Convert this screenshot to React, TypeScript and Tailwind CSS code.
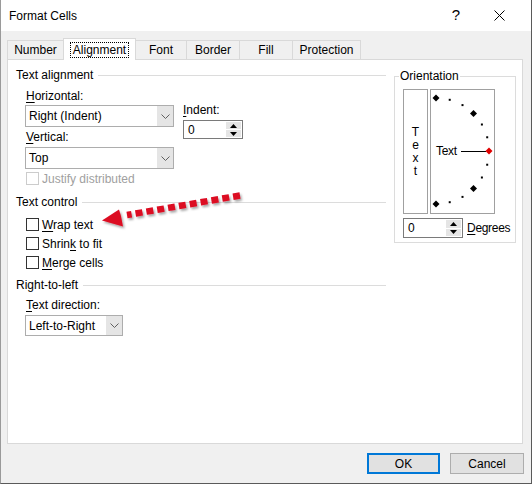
import React from "react";

function Chevron() {
  return (
    <svg width="9" height="5" viewBox="0 0 9 5" fill="none">
      <path d="M0.5 0.5 L4.5 4.5 L8.5 0.5" stroke="#606060" strokeWidth="1" />
    </svg>
  );
}

function Select({ value, className }: { value: string; className: string }) {
  return (
    <div className={`flex border border-[#adadad] bg-white ${className}`}>
      <span className="flex-1 pl-[3px] flex items-center">{value}</span>
      <span className="w-[16px] bg-[#e5e5e5] flex items-center justify-center">
        <Chevron />
      </span>
    </div>
  );
}

function Spinner({ className }: { className: string }) {
  return (
    <div className={`flex border border-[#7a7a7a] bg-white ${className}`}>
      <span className="flex-1 pl-[4px] flex items-center">0</span>
      <div className="w-[17px] flex flex-col gap-[1px] p-[1px]">
        <span className="flex-1 bg-[#e5e5e5] flex items-center justify-center">
          <svg width="7" height="4" viewBox="0 0 7 4">
            <path d="M0 4 L3.5 0 L7 4 Z" fill="#000" />
          </svg>
        </span>
        <span className="flex-1 bg-[#e5e5e5] flex items-center justify-center">
          <svg width="7" height="4" viewBox="0 0 7 4">
            <path d="M0 0 L3.5 4 L7 0 Z" fill="#000" />
          </svg>
        </span>
      </div>
    </div>
  );
}

function Checkbox({ label, disabled }: { label: React.ReactNode; disabled?: boolean }) {
  return (
    <div className="flex items-center h-[13px] ml-[18px] gap-[3px]">
      <span
        className={`w-[13px] h-[13px] border bg-white ${disabled ? "border-[#cccccc]" : "border-[#333333]"}`}
      />
      <span className={disabled ? "text-[#a0a0a0]" : "text-black"}>{label}</span>
    </div>
  );
}

function Header({ title, className }: { title: string; className: string }) {
  return (
    <div className={`flex items-center h-[14px] pl-[8px] ${className}`}>
      <span className="pr-[5px]">{title}</span>
      <span className="flex-1 h-px bg-[#dcdcdc]" />
    </div>
  );
}

function U({ children }: { children: React.ReactNode }) {
  return <span className="underline underline-offset-2">{children}</span>;
}

function Dial() {
  const marks: { x: number; y: number; big: boolean; angle: number }[] = [];
  for (let a = 90; a >= -90; a -= 15) {
    const r = (a * Math.PI) / 180;
    marks.push({ x: 5 + 53 * Math.cos(r), y: 61 - 53 * Math.sin(r), big: a % 45 === 0, angle: a });
  }
  return (
    <div className="relative w-[65px] h-[125px] border border-[#a0a0a0] ml-[2px]">
      <svg width="63" height="123" viewBox="0 0 63 123" className="block">
        <line x1="30" y1="61.5" x2="55" y2="61.5" stroke="#000" strokeWidth="1" />
        {marks.map((m) =>
          m.big ? (
            <path
              key={m.angle}
              d={`M${m.x} ${m.y - 3.5} L${m.x + 3.5} ${m.y} L${m.x} ${m.y + 3.5} L${m.x - 3.5} ${m.y} Z`}
              fill={m.angle === 0 ? "#e00000" : "#000"}
            />
          ) : (
            <rect key={m.angle} x={m.x - 1} y={m.y - 1} width="2" height="2" fill="#000" />
          )
        )}
      </svg>
      <span className="absolute left-[5px] top-[54px] leading-[14px] tracking-[-0.3px]">Text</span>
    </div>
  );
}

function Arrow() {
  return (
    <svg className="absolute left-0 top-0 pointer-events-none" width="532" height="484" viewBox="0 0 532 484">
      <defs>
        <filter id="sh" x="-20%" y="-50%" width="140%" height="200%">
          <feDropShadow dx="1.5" dy="2" stdDeviation="1.2" floodColor="#000" floodOpacity="0.35" />
        </filter>
      </defs>
      <g filter="url(#sh)">
        <line
          x1="239"
          y1="195.5"
          x2="126"
          y2="215"
          stroke="#dc0a22"
          strokeWidth="6.5"
          strokeDasharray="7 4"
        />
        <path d="M101 220.5 L118 209.5 L120 216 L122 226.5 Z" fill="#dc0a22" />
      </g>
    </svg>
  );
}

export default function App() {
  return (
    <div className="relative w-[532px] h-[484px] bg-[#f0f0f0] border-l border-r border-b border-l-[#9a9a9a] border-r-[#5a5a5a] border-b-[#5a5a5a] font-['Segoe_UI','Liberation_Sans',Arial,sans-serif] text-[12px] text-black overflow-hidden">
      {/* title bar */}
      <div className="h-[31px] bg-white flex items-center pl-[8px]">
        <span className="flex-1 pt-[1px]">Format Cells</span>
        <span className="text-[15px] mr-[34px]">?</span>
        <svg width="11" height="11" viewBox="0 0 11 11" className="mr-[26px]">
          <path d="M0.5 0.5 L10.5 10.5 M10.5 0.5 L0.5 10.5" stroke="#000" strokeWidth="1" />
        </svg>
      </div>

      {/* tabs */}
      <div className="pt-[7px] pl-[6px]">
        <div className="flex items-end h-[21px]">
          <div className="h-[19px] w-[57px] border border-b-0 border-[#d9d9d9] flex items-center justify-center">
            Number
          </div>
          <div className="relative z-10 h-[22px] w-[73px] -ml-px mb-[-1px] border border-b-0 border-[#d9d9d9] bg-white flex items-start justify-center pt-[3px]">
            <span className="border border-dotted border-black px-[2px] leading-[14px]">Alignment</span>
          </div>
          <div className="h-[19px] w-[52px] -ml-px border border-b-0 border-[#d9d9d9] flex items-center justify-center">
            Font
          </div>
          <div className="h-[19px] w-[54px] -ml-px border border-b-0 border-[#d9d9d9] flex items-center justify-center">
            Border
          </div>
          <div className="h-[19px] w-[54px] -ml-px border border-b-0 border-[#d9d9d9] flex items-center justify-center">
            Fill
          </div>
          <div className="h-[19px] w-[69px] -ml-px border border-b-0 border-[#d9d9d9] flex items-center justify-center">
            Protection
          </div>
        </div>

        {/* panel */}
        <div className="w-[516px] h-[385px] border border-[#d9d9d9] bg-white flex">
          <div className="w-[378px] pt-[8px]">
            <Header title="Text alignment" className="" />
            <div className="flex">
              <div className="ml-[17px] w-[149px]">
                <div className="mt-[7px] h-[14px] leading-[14px] pl-[1px]">
                  <U>H</U>orizontal:
                </div>
                <Select value="Right (Indent)" className="mt-[2px] h-[22px] w-[149px]" />
                <div className="mt-[3px] h-[14px] leading-[14px] pl-[1px]">
                  <U>V</U>ertical:
                </div>
                <Select value="Top" className="mt-[3px] h-[22px] w-[149px]" />
              </div>
              <div className="ml-[9px]">
                <div className="mt-[21px] h-[14px] leading-[14px]">
                  <U>I</U>ndent:
                </div>
                <Spinner className="mt-[3px] h-[19px] w-[60px]" />
              </div>
            </div>
            <div className="mt-[3px]">
              <Checkbox label="Justify distributed" disabled />
            </div>

            <Header title="Text control" className="mt-[10px]" />
            <div className="mt-[9px] flex flex-col gap-[6px]">
              <Checkbox label={<><U>W</U>rap text</>} />
              <Checkbox label={<>Shrin<U>k</U> to fit</>} />
              <Checkbox label={<><U>M</U>erge cells</>} />
            </div>

            <Header title="Right-to-left" className="mt-[9px]" />
            <div className="ml-[18px] mt-[6px] h-[14px] leading-[14px]">
              <U>T</U>ext direction:
            </div>
            <Select value="Left-to-Right" className="ml-[17px] mt-[3px] h-[21px] w-[98px]" />
          </div>

          {/* orientation */}
          <div className="relative ml-[8px] mt-[16px] w-[122px] h-[167px] border border-[#dcdcdc]">
            <span className="absolute -top-[8px] left-[4px] bg-white px-[1px] leading-[14px]">Orientation</span>
            <div className="flex ml-[8px] mt-[12px]">
              <div className="w-[25px] h-[125px] border border-[#a0a0a0] flex flex-col items-center justify-center leading-[13px]">
                <span>T</span>
                <span>e</span>
                <span>x</span>
                <span>t</span>
              </div>
              <Dial />
            </div>
            <div className="flex items-center ml-[8px] mt-[4px] gap-[4px]">
              <Spinner className="h-[20px] w-[60px]" />
              <span className="tracking-[-0.3px]">
                <U>D</U>egrees
              </span>
            </div>
          </div>
        </div>

        {/* buttons */}
        <div className="flex justify-end gap-[10px] mt-[9px] pr-[7px]">
          <button className="w-[73px] h-[21px] border-2 border-[#0078d7] bg-[#e1e1e1] flex items-center justify-center">
            OK
          </button>
          <button className="w-[74px] h-[21px] border border-[#adadad] bg-[#e1e1e1] flex items-center justify-center">
            Cancel
          </button>
        </div>
      </div>

      <Arrow />
    </div>
  );
}
